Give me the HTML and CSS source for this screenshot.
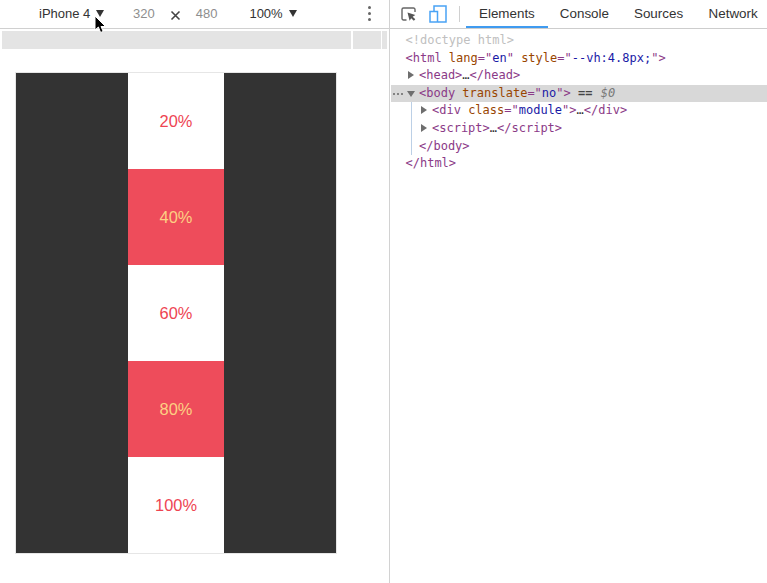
FILE: index.html
```html
<!DOCTYPE html>
<html lang="en">
<head>
<meta charset="utf-8">
<title>Device mode</title>
<link rel="stylesheet" href="styles.css">
</head>
<body>
<div class="app">
  <section class="viewport">
    <header class="device-bar">
      <span class="device-name">iPhone 4</span>
      <span class="caret caret-device"></span>
      <span class="dim dim-w">320</span>
      <svg class="times" width="11" height="11" viewBox="0 0 11 11"><path d="M1.500 1.500 9.500 9.500M9.500 1.500 1.500 9.500" stroke="#444" stroke-width="1.600" fill="none"/></svg>
      <span class="dim dim-h">480</span>
      <span class="zoom-level">100%</span>
      <span class="caret caret-zoom"></span>
      <span class="kebab"><i></i><i></i><i></i></span>
      <svg class="cursor" width="14" height="20" viewBox="0 0 14 20"><path d="M1 1V15L4.400 12 6.600 17.500 9.200 16.400 7 11.500H11.500Z" fill="#000" stroke="#fff" stroke-width="1"/></svg>
    </header>
    <div class="media-bar">
      <div class="media media-a"></div>
      <div class="media media-b"></div>
      <div class="media media-c"></div>
    </div>
    <div class="stage">
      <div class="device">
        <div class="side"></div>
        <div class="column">
          <div class="cell">20%</div>
          <div class="cell hot">40%</div>
          <div class="cell">60%</div>
          <div class="cell hot">80%</div>
          <div class="cell">100%</div>
        </div>
        <div class="side"></div>
      </div>
    </div>
  </section>
  <section class="devtools">
    <nav class="tabs">
      <svg class="tool" width="16" height="14" viewBox="0 0 16 14"><path d="M5.500 13H2.500A1.500 1.500 0 0 1 1 11.500V2.500A1.500 1.500 0 0 1 2.500 1H12.500A1.500 1.500 0 0 1 14 2.500V5" fill="none" stroke="#666" stroke-width="1.400"/><path d="M6.500 5.500 8.600 13.800 10.200 11.200 12.800 13.800 14.300 12.300 11.700 9.700 14.300 8Z" fill="#555"/></svg>
      <svg class="tool tool-device" width="18" height="18" viewBox="0 0 18 18"><path d="M5 6V1H17V17H9" fill="none" stroke="#4aa3f5" stroke-width="1.500"/><rect x="1" y="6.500" width="7.500" height="10.500" fill="#fff" stroke="#4aa3f5" stroke-width="1.500"/></svg>
      <span class="sep"></span>
      <span class="tab active">Elements</span>
      <span class="tab tab-console">Console</span>
      <span class="tab tab-sources">Sources</span>
      <span class="tab">Network</span>
    </nav>
    <div class="tree">
      <div class="line l0 doctype">&lt;!doctype html&gt;</div>
      <div class="line l0"><span class="t">&lt;html</span> <span class="a">lang</span><span class="t">="</span><span class="v">en</span><span class="t">"</span> <span class="a">style</span><span class="t">="</span><span class="v">--vh:4.8px;</span><span class="t">"&gt;</span></div>
      <div class="line l1"><span class="arrow right"></span><span class="t">&lt;head&gt;</span>…<span class="t">&lt;/head&gt;</span></div>
      <div class="line selected"><span class="dots"><i></i><i></i><i></i></span><span class="arrow down"></span><span class="t">&lt;body</span> <span class="a">translate</span><span class="t">="</span><span class="v">no</span><span class="t">"&gt;</span> <span class="eq">==</span> <span class="dollar">$0</span></div>
      <div class="children">
        <div class="line l2"><span class="arrow right"></span><span class="t">&lt;div</span> <span class="a">class</span><span class="t">="</span><span class="v">module</span><span class="t">"&gt;</span>…<span class="t">&lt;/div&gt;</span></div>
        <div class="line l2"><span class="arrow right"></span><span class="t">&lt;script&gt;</span>…<span class="t">&lt;/script&gt;</span></div>
        <div class="line l3"><span class="t">&lt;/body&gt;</span></div>
      </div>
      <div class="line l0"><span class="t">&lt;/html&gt;</span></div>
    </div>
  </section>
</div>
</body>
</html>
```
FILE: styles.css
```css
* { box-sizing: border-box; }
html, body { margin: 0; height: 100%; background: #fff; overflow: hidden; }
.app { display: flex; height: 583px; width: 767px; font-family: "Liberation Sans", Arial, sans-serif; }

.viewport { width: 390px; flex: none; border-right: 1px solid #d2d2d2; display: flex; flex-direction: column; }
.device-bar { height: 29px; flex: none; border-bottom: 1px solid #d0d0d0; position: relative; display: flex; align-items: center; font-size: 13px; color: #333; padding-left: 39px; padding-bottom: 1px; }
.device-name { width: 57px; }
.caret { width: 0; height: 0; border-left: 4.500px solid transparent; border-right: 4.500px solid transparent; border-top: 7px solid #333; }
.dim { color: #8e8e8e; }
.dim-w { margin-left: 29px; }
.times { margin-left: 15px; margin-top: 3px; }
.dim-h { margin-left: 15px; }
.zoom-level { margin-left: 32px; width: 39px; }
.caret-zoom { margin-left: 1px; }
.kebab { margin-left: 71px; display: flex; flex-direction: column; gap: 3px; }
.kebab i { width: 3px; height: 3px; border-radius: 50%; background: #666; display: block; }
.cursor { position: absolute; left: 94px; top: 15px; }

.media-bar { margin-top: 2px; height: 18px; padding: 0 2px; display: flex; gap: 1.500px; flex: none; }
.media { background: #e4e4e4; height: 18px; }
.media-a { width: 349px; }
.media-b { width: 28px; }
.media-c { width: 5px; }

.stage { flex: 1; padding: 23px 0 0 15px; }
.device { width: 322px; height: 482px; border: 1px solid #e6e6e6; display: flex; }
.side { width: 112px; background: #333; }
.column { width: 96px; display: flex; flex-direction: column; }
.cell { height: 96px; padding-top: 1px; display: flex; align-items: center; justify-content: center; font-size: 16.400px; color: #ee4452; background: #fff; }
.cell.hot { background: #ee4c5b; color: #fdd083; }

.devtools { flex: 1; min-width: 0; overflow: hidden; display: flex; flex-direction: column; }
.tabs { height: 29px; flex: none; border-bottom: 1px solid #cdcdcd; display: flex; align-items: center; padding-left: 11px; font-size: 13.400px; color: #333; }
.tool { flex: none; }
.tool-device { margin-left: 12px; }
.sep { width: 1px; height: 16px; background: #d0d0d0; margin-left: 12px; margin-right: 6px; flex: none; }
.tab { flex: none; height: 28px; line-height: 27px; padding: 0 12px; white-space: nowrap; }
.tab.active { padding: 0 13px; border-bottom: 2px solid #3f9bf0; }
.tab-console { margin-right: 1px; }
.tab-sources { margin-right: 1.500px; }

.tree { padding-top: 3px; font-family: "DejaVu Sans Mono", monospace; font-size: 12px; color: #333; }
.line { height: 17.600px; line-height: 17.600px; white-space: nowrap; position: relative; }
.l0 { padding-left: 15.500px; }
.l1 { padding-left: 29px; }
.l2 { padding-left: 20px; }
.l3 { padding-left: 7px; }
.doctype { color: #c0c0c0; }
.t { color: #8b3a87; }
.a { color: #994500; }
.v { color: #1a1aa6; }
.eq { color: #444; font-weight: bold; }
.dollar { color: #777; font-style: italic; margin-left: 1px; }
.selected { background: #d8d8d8; padding-left: 28px; margin-left: 1px; }
.children { margin-left: 21px; border-left: 1px solid #bcd0e6; }
.arrow { position: absolute; width: 0; height: 0; }
.arrow.right { margin-left: -11px; top: 4px; border-top: 4px solid transparent; border-bottom: 4px solid transparent; border-left: 6px solid #6e6e6e; }
.arrow.down { left: 16px; top: 6px; border-left: 4.500px solid transparent; border-right: 4.500px solid transparent; border-top: 6px solid #6e6e6e; }
.dots { position: absolute; left: 2px; top: 8px; display: flex; gap: 2px; }
.dots i { width: 2px; height: 2px; border-radius: 50%; background: #666; display: block; }
```
